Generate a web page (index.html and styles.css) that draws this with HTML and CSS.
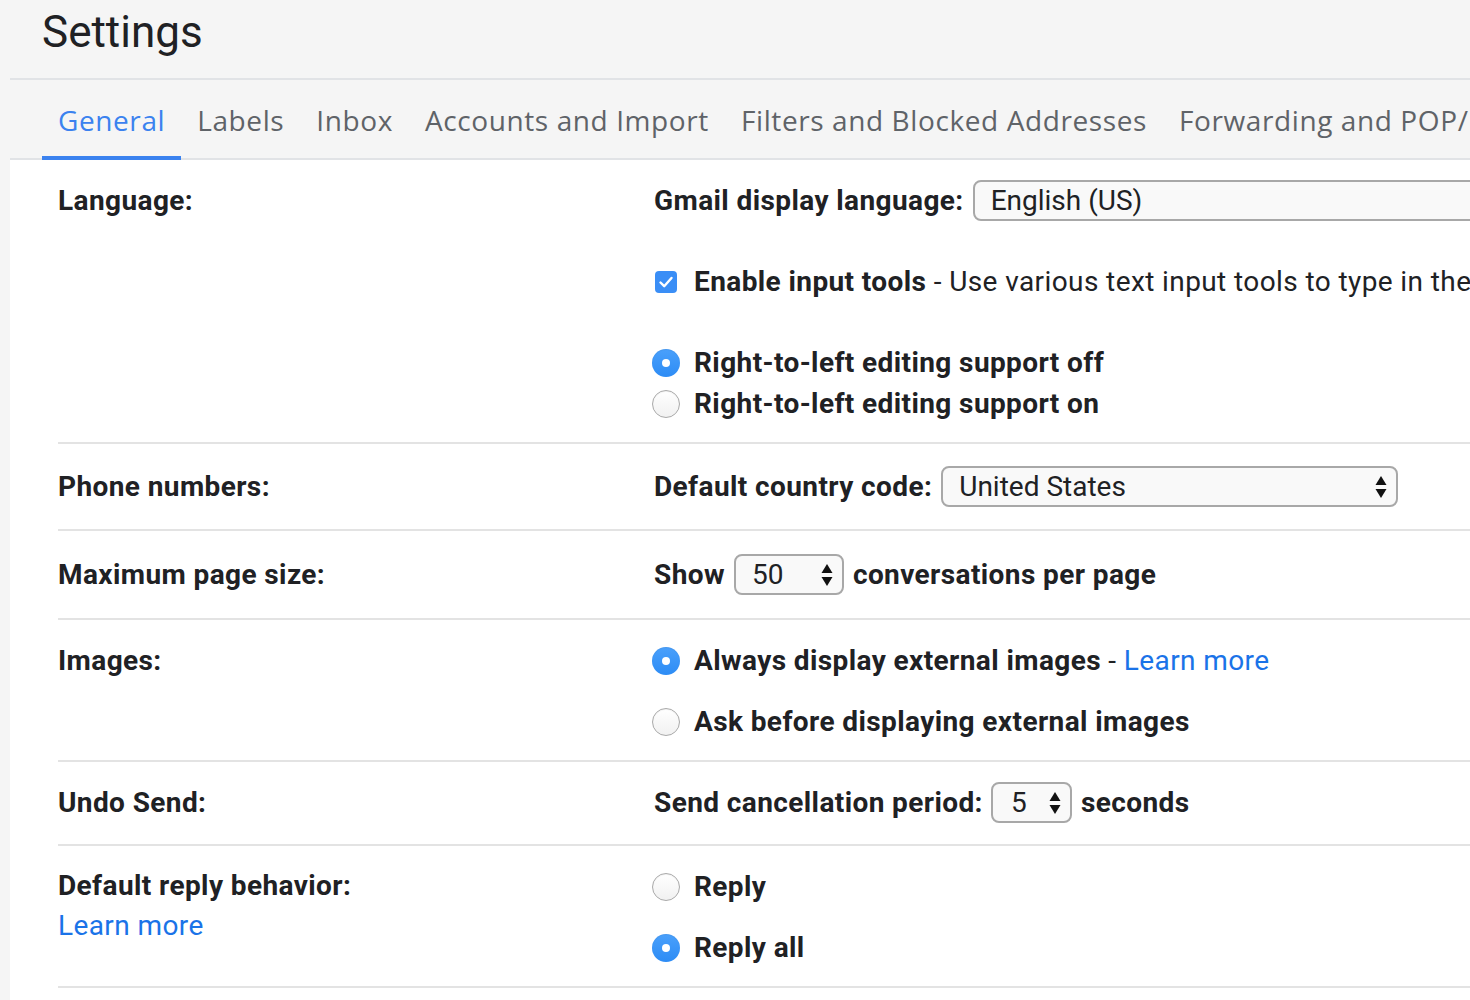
FILE: index.html
```html
<!DOCTYPE html>
<html lang="en">
<head>
<meta charset="utf-8">
<title>Settings</title>
<link rel="stylesheet" href="styles.css">
</head>
<body>
<div class="app">
  <header class="header"><h1 class="title">Settings</h1></header>
  <nav class="tabs">
    <a class="tab active">General</a>
    <a class="tab">Labels</a>
    <a class="tab">Inbox</a>
    <a class="tab">Accounts and Import</a>
    <a class="tab">Filters and Blocked Addresses</a>
    <a class="tab">Forwarding and POP/IMAP</a>
    <a class="tab">Add-ons</a>
  </nav>
  <main class="panel">
    <section class="row">
      <div class="label">Language:</div>
      <div class="controls">
        <div class="line"><b>Gmail display language:</b><span class="select sel-lang">English (US)</span></div>
        <div class="line gap-lg"><span class="checkbox"><svg viewBox="0 0 22 22" width="22" height="22"><path d="M5.5 11.5 L9.2 15.2 L16.5 7" fill="none" stroke="#fff" stroke-width="2.4" stroke-linecap="round" stroke-linejoin="round"/></svg></span><b>Enable input tools</b><span class="reg">&nbsp;- Use various text input tools to type in the language of your choice - Edit tools</span></div>
        <div class="line gap-lg"><span class="radio on"></span><b>Right-to-left editing support off</b></div>
        <div class="line"><span class="radio"></span><b>Right-to-left editing support on</b></div>
      </div>
    </section>
    <section class="row row-single">
      <div class="label">Phone numbers:</div>
      <div class="controls">
        <div class="line"><b>Default country code:</b><span class="select sel-country">United States<svg class="arrows" viewBox="0 0 12 24" width="12" height="24"><polygon points="6,1 11.5,10 0.5,10"/><polygon points="0.5,14 11.5,14 6,23"/></svg></span></div>
      </div>
    </section>
    <section class="row row-single2">
      <div class="label">Maximum page size:</div>
      <div class="controls">
        <div class="line"><b>Show</b><span class="select sel-page">50<svg class="arrows" viewBox="0 0 12 24" width="12" height="24"><polygon points="6,1 11.5,10 0.5,10"/><polygon points="0.5,14 11.5,14 6,23"/></svg></span><b>conversations per page</b></div>
      </div>
    </section>
    <section class="row">
      <div class="label">Images:</div>
      <div class="controls">
        <div class="line"><span class="radio on"></span><b>Always display external images</b><span class="reg">&nbsp;- </span><a class="link">&nbsp;Learn more</a></div>
        <div class="line gap-sm"><span class="radio"></span><b>Ask before displaying external images</b></div>
      </div>
    </section>
    <section class="row row-undo">
      <div class="label">Undo Send:</div>
      <div class="controls">
        <div class="line"><b>Send cancellation period:</b><span class="select sel-undo">5<svg class="arrows" viewBox="0 0 12 24" width="12" height="24"><polygon points="6,1 11.5,10 0.5,10"/><polygon points="0.5,14 11.5,14 6,23"/></svg></span><b>seconds</b></div>
      </div>
    </section>
    <section class="row">
      <div class="label label-multi">Default reply behavior:<br><a class="link">Learn more</a></div>
      <div class="controls">
        <div class="line"><span class="radio"></span><b>Reply</b></div>
        <div class="line gap-sm"><span class="radio on"></span><b>Reply all</b></div>
      </div>
    </section>
  </main>
</div>
</body>
</html>
```

FILE: styles.css
```css
html, body {
  margin: 0;
  padding: 0;
}
body {
  background: #f5f5f5;
  font-family: Roboto, "Liberation Sans", Arial, sans-serif;
  color: #202124;
  width: 1470px;
  height: 1000px;
  overflow: hidden;
}
.app {
  margin-left: 10px;
  height: 1000px;
}
.header {
  height: 78px;
  border-bottom: 2px solid #e1e3e6;
  padding-left: 32px;
  box-sizing: content-box;
}
.title {
  margin: 0;
  font-weight: 400;
  font-size: 44px;
  line-height: 64px;
  color: #202124;
  white-space: nowrap;
}
.tabs {
  display: flex;
  height: 78px;
  border-bottom: 2px solid #e1e3e6;
  padding-left: 32px;
  white-space: nowrap;
}
.tab {
  display: flex;
  align-items: center;
  box-sizing: border-box;
  height: 80px;
  margin-bottom: -2px;
  padding: 3px 16px 0 16px;
  border-bottom: 4px solid transparent;
  font-family: "Open Sans", Roboto, sans-serif;
  font-size: 28px;
  letter-spacing: 0.6px;
  color: #5f6368;
  flex-shrink: 0;
}
.tab.active {
  color: #3b82ef;
  border-bottom-color: #3b82ef;
}
.panel {
  background: #fff;
  padding-left: 48px;
  height: 840px;
}
.row {
  display: grid;
  grid-template-columns: 596px 1fr;
  padding: 20px 0 18px;
  border-bottom: 2px solid #e3e3e3;
  font-size: 28px;
  letter-spacing: 0.4px;
}
.row-single { padding: 22px 0 22px; }
.row-single2 { padding: 23px 0 23px; }
.row-undo { padding: 20px 0 21px; }
.label {
  font-weight: 700;
  line-height: 41px;
  white-space: nowrap;
}
.label-multi { line-height: 40px; }
.label-multi .link { font-weight: 400; }
.controls {
  display: flex;
  flex-direction: column;
  min-width: 0;
}
.line {
  display: flex;
  align-items: center;
  min-height: 41px;
  white-space: nowrap;
}
.line b { font-weight: 700; }
.reg { font-weight: 400; }
.gap-lg { margin-top: 40px; }
.gap-sm { margin-top: 20px; }
.link {
  color: #1a73e8;
  font-weight: 400;
  text-decoration: none;
}
.checkbox {
  width: 22px;
  height: 22px;
  border-radius: 4px;
  background: #3a8ef6;
  margin: 0 17px 0 1px;
  flex-shrink: 0;
  display: flex;
}
.radio {
  width: 28px;
  height: 28px;
  box-sizing: border-box;
  border-radius: 50%;
  border: 1.5px solid #a9a9a9;
  background: linear-gradient(#ffffff, #f1f1f1);
  box-shadow: inset 0 1px 1px rgba(0,0,0,0.05);
  margin: 0 14px 0 -2px;
  flex-shrink: 0;
  position: relative;
}
.radio.on {
  border: none;
  background: linear-gradient(#4aa0fb, #2d8cf5);
}
.radio.on::after {
  content: "";
  position: absolute;
  left: 10px;
  top: 10px;
  width: 8px;
  height: 8px;
  border-radius: 50%;
  background: #fff;
}
.select {
  display: inline-flex;
  align-items: center;
  box-sizing: border-box;
  height: 41px;
  border: 2px solid #a8a8a8;
  border-radius: 8px;
  background: #f9f9f9;
  font-weight: 400;
  font-size: 28px;
  letter-spacing: 0;
  padding: 0 9px 0 16px;
  margin: 0 9px;
  flex-shrink: 0;
}
.arrows {
  margin-left: auto;
  fill: #111;
}
.sel-lang { width: 620px; margin-left: 9px; }
.sel-country { width: 457px; margin-left: 9px; }
.sel-page { width: 110px; margin: 0 9px 0 9px; }
.sel-undo { width: 81px; margin: 0 9px 0 8px; padding-left: 18px; }
```
